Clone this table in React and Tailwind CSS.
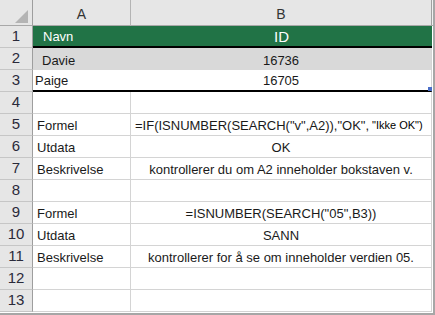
const rows = [
  { n: 1, a: 'Navn', b: 'ID', kind: 'head' },
  { n: 2, a: 'Davie', b: '16736', kind: 'band' },
  { n: 3, a: 'Paige', b: '16705', kind: 'last' },
  { n: 4 },
  { n: 5, a: 'Formel', kind: 'formula1' },
  { n: 6, a: 'Utdata', b: 'OK' },
  { n: 7, a: 'Beskrivelse', b: 'kontrollerer du om A2 inneholder bokstaven v.' },
  { n: 8 },
  { n: 9, a: 'Formel', b: '=ISNUMBER(SEARCH("05",B3))' },
  { n: 10, a: 'Utdata', b: 'SANN' },
  { n: 11, a: 'Beskrivelse', b: 'kontrollerer for å se om inneholder verdien 05.' },
  { n: 12 },
  { n: 13 },
];

function RowNum({ n }) {
  return (
    <div className="w-[33px] h-full shrink-0 flex items-center justify-center bg-[#e6e6e6] border-r border-r-[#9e9e9e] border-b border-b-[#c6c6c6] text-[15px] text-[#2a2a3a]">
      {n}
    </div>
  );
}

function Row({ r }) {
  let cellA = 'w-[98px] border-r border-b border-[#d4d4d4] pl-[4px]';
  let cellB = 'w-[301px] border-r border-b border-[#d4d4d4] justify-center';
  if (r.kind === 'head') {
    cellA = 'w-[98px] bg-[#217346] border-b-2 border-b-black text-white pl-[10px]';
    cellB = 'w-[301px] bg-[#217346] border-b-2 border-b-black text-white justify-center text-[15px]';
  } else if (r.kind === 'band') {
    cellA = 'w-[98px] bg-[#d9d9d9] pl-[9px]';
    cellB = 'w-[301px] bg-[#d9d9d9] border-r border-r-[#d4d4d4] justify-center';
  } else if (r.kind === 'last') {
    cellA = 'w-[98px] border-b-2 border-b-black pl-[2px]';
    cellB = 'relative w-[301px] border-b-2 border-b-black border-r border-r-[#d4d4d4] justify-center';
  } else if (r.kind === 'formula1') {
    cellB = 'w-[301px] border-r border-b border-[#d4d4d4] pl-[4px]';
  }

  return (
    <div className="flex h-[22px]">
      <RowNum n={r.n} />
      <div className={`${cellA} h-full shrink-0 flex items-end pb-[2px] leading-[15px] whitespace-nowrap`}>
        {r.a}
      </div>
      <div className={`${cellB} h-full shrink-0 flex items-end pb-[2px] leading-[15px] whitespace-nowrap`}>
        {r.kind === 'formula1' ? (
          <>
            <span>=IF(ISNUMBER(SEARCH("v",A2)),"OK", </span>
            <span className="text-[11px] text-black ml-[3px]">"Ikke OK")</span>
          </>
        ) : (
          r.b
        )}
        {r.kind === 'last' && (
          <span className="absolute right-[-1px] bottom-[-1px] w-[4px] h-[4px] bg-[#4a6ec8]" />
        )}
      </div>
      <div className="flex-1 h-full" />
    </div>
  );
}

export default function App() {
  return (
    <div
      className="w-[435px] h-[315px] overflow-hidden bg-white border-r-2 border-b-2 border-[#a6a6a6] text-[13px] text-[#1a1a1a]"
      style={{ fontFamily: '"Liberation Sans", Arial, sans-serif' }}
    >
      {/* column headers */}
      <div className="flex h-[26px] bg-[#e6e6e6]">
        <div className="relative w-[33px] h-full shrink-0 border-r border-r-[#9e9e9e] border-b border-b-[#a8a8a8]">
          <svg className="absolute left-[15px] top-[10px]" width="13" height="13" viewBox="0 0 13 13">
            <polygon points="13,0 13,13 0,13" fill="#b4b4b4" />
          </svg>
        </div>
        <div className="w-[98px] h-full shrink-0 flex items-center justify-center pt-[3px] border-r border-r-[#b4b4b4] border-b border-b-[#a8a8a8] text-[14px] text-[#333]">
          A
        </div>
        <div className="w-[301px] h-full shrink-0 flex items-center justify-center pt-[3px] border-r border-r-[#a0a0a0] border-b border-b-[#a8a8a8] text-[14px] text-[#333]">
          B
        </div>
        <div className="flex-1 h-full border-b border-b-[#a8a8a8] bg-[#f0f0f0]" />
      </div>
      {rows.map(r => (
        <Row key={r.n} r={r} />
      ))}
    </div>
  );
}
